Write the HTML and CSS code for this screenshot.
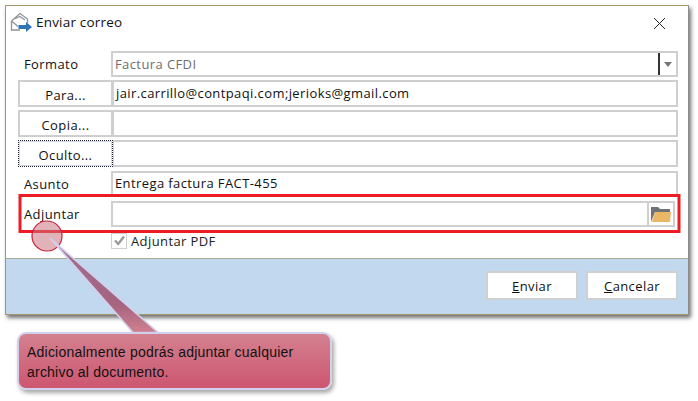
FILE: index.html
```html
<!DOCTYPE html>
<html lang="es">
<head>
<meta charset="utf-8">
<title>Enviar correo</title>
<link rel="stylesheet" href="styles.css">
</head>
<body>
<div class="window">
  <div class="titlebar">
    <svg class="app-icon" width="24" height="24" viewBox="0 0 24 24">
      <path d="M2.500 11 L11 3.500 L18.500 9 V13 M2.500 11 V20 H11 M2.500 11 L9 16.500 M5 9 L11 6.500 L16 10" fill="none" stroke="#8f9499" stroke-width="1.300"/>
      <path d="M9.500 15 H17 V12 L23 17 L17 22 V19 H9.500 Z" fill="#2f74b5"/>
    </svg>
    <span class="title">Enviar correo</span>
    <svg class="close" width="13" height="13" viewBox="0 0 13 13"><path d="M1 1 L12 12 M12 1 L1 12" stroke="#222" stroke-width="1" fill="none"/></svg>
  </div>
  <div class="form">
    <div class="row row-format">
      <span class="label">Formato</span>
      <div class="field select"><span class="muted">Factura CFDI</span><span class="caret-box"><i class="caret"></i></span></div>
    </div>
    <div class="row row-btn">
      <button class="pick">Para...</button>
      <div class="field joined">jair.carrillo@contpaqi.com;jerioks@gmail.com</div>
    </div>
    <div class="row row-btn">
      <button class="pick">Copia...</button>
      <div class="field joined"></div>
    </div>
    <div class="row row-btn">
      <button class="pick focus">Oculto...</button>
      <div class="field joined"></div>
    </div>
    <div class="row row-subject">
      <span class="label">Asunto</span>
      <div class="field">Entrega factura FACT-455</div>
    </div>
    <div class="row row-attach">
      <span class="label">Adjuntar</span>
      <div class="field attach">
        <span class="folder-box">
          <svg width="22" height="19" viewBox="0 0 22 19">
            <path d="M1 17 V2 H8 L10 4 H20 V7 H5 L1 17 Z" fill="#6f7276"/>
            <path d="M5 7 H21 L20 17 H2 Z" fill="#e9b766"/>
          </svg>
        </span>
      </div>
    </div>
    <div class="check-row">
      <span class="check"><svg width="13" height="13" viewBox="0 0 13 13"><path d="M2 6.500 L5.200 10 L11 2.500" fill="none" stroke="#9a9a9a" stroke-width="2.400"/></svg></span>
      <span class="muted-dark">Adjuntar PDF</span>
    </div>
  </div>
  <div class="footer">
    <button class="action"><u>E</u>nviar</button>
    <button class="action"><u>C</u>ancelar</button>
  </div>
</div>
<svg class="overlay" width="698" height="401" viewBox="0 0 698 401">
  <defs>
    <linearGradient id="tip" x1="0" y1="0" x2="0" y2="1">
      <stop offset="0" stop-color="#9a5f80" stop-opacity=".85"/>
      <stop offset=".7" stop-color="#a5647f"/>
      <stop offset="1" stop-color="#d0808f"/>
    </linearGradient>
  </defs>
  <rect x="20" y="195.500" width="659" height="36" fill="none" stroke="#ed1c24" stroke-width="3"/>
  <circle cx="47" cy="236" r="15" fill="#c9747f" fill-opacity=".55" stroke="#c8203f" stroke-width="1.200"/>
  <path d="M50 238 L133 332.500 H158 Z" fill="url(#tip)" stroke="#d3d0ee" stroke-width="1.600"/>
</svg>
<div class="note">Adicionalmente podrás adjuntar cualquier archivo al documento.</div>
</body>
</html>
```
FILE: styles.css
```css
* { box-sizing: border-box; }
html, body { margin: 0; padding: 0; }
body {
  width: 698px;
  height: 401px;
  background: #fff;
  position: relative;
  overflow: hidden;
  font-family: "Open Sans", "Noto Sans", sans-serif;
  font-size: 13px;
  letter-spacing: .4px;
  color: #111;
}
.window {
  margin: 5px 0 0 5px;
  width: 684px;
  height: 310px;
  background: #fff;
  border: 1px solid #a4976c;
  border-right-color: #8d8d8d;
  box-shadow: 2px 3px 4px rgba(0,0,0,.55);
  display: flex;
  flex-direction: column;
}
.titlebar {
  height: 34px;
  display: flex;
  align-items: center;
  padding: 0 22px 3px 3px;
}
.app-icon { margin-right: 3px; }
.title { font-size: 13.500px; letter-spacing: .2px; color: #111; flex: 1; }
.close { margin-top: 3px; }
.form { flex: 1; padding: 11px 10px 0 12px; display: flex; flex-direction: column; }
.row { display: flex; align-items: stretch; }
.row-format { height: 26px; margin-bottom: 3px; }
.row-btn { height: 27px; margin-bottom: 3px; }
.row-subject { height: 26px; margin-top: 1px; margin-bottom: 4px; }
.row-attach { height: 26px; padding-right: 3px; }
.label {
  width: 93px;
  padding-left: 6px;
  padding-top: 4px;
}
.field {
  flex: 1;
  border: 2px solid #cfcfcf;
  background: #fff;
  padding: 0 2px 2px;
  display: flex;
  align-items: center;
  white-space: nowrap;
}
.muted { color: #6d6d6d; flex: 1; }
.select { padding-right: 0; padding-bottom: 0; }
.caret-box {
  width: 18px;
  height: 100%;
  border-left: 2px solid #333;
  display: flex;
  align-items: center;
  justify-content: center;
}
.caret {
  width: 0;
  height: 0;
  border-left: 4px solid transparent;
  border-right: 4px solid transparent;
  border-top: 5px solid #777;
}
.joined { border-left-width: 1px; }
.pick {
  width: 95px;
  background: #fff;
  border: 2px solid #cfcfcf;
  font: inherit;
  letter-spacing: inherit;
  color: #111;
  padding: 2px 0 0;
}
.pick.focus { border: 1px dotted #223; outline: 1px solid #cfd6e4; outline-offset: -2px; }
.attach { padding: 0; justify-content: flex-end; }
.folder-box {
  width: 26px;
  height: 100%;
  border-left: 2px solid #cfcfcf;
  display: flex;
  align-items: center;
  justify-content: center;
}
.check-row {
  display: flex;
  align-items: center;
  gap: 4px;
  height: 17px;
  margin-top: 5px;
  padding-left: 93px;
}
.check {
  width: 16px;
  height: 16px;
  border: 1px solid #cfcfcf;
  display: flex;
  align-items: center;
  justify-content: center;
}
.muted-dark { color: #222; }
.footer {
  height: 56px;
  background: #c1d8ef;
  border-top: 1px solid #a7a893;
  display: flex;
  justify-content: flex-end;
  gap: 8px;
  padding: 12px 10px 0 0;
}
.action {
  width: 92px;
  height: 29px;
  background: #fff;
  border: 2px solid #d0d0d0;
  font: inherit;
  letter-spacing: inherit;
  color: #111;
  padding: 0;
}
.overlay { position: absolute; left: 0; top: 0; pointer-events: none; }
.note {
  position: absolute;
  left: 17px;
  top: 332px;
  width: 315px;
  height: 58px;
  padding: 8px 10px 0 8px;
  border: 2px solid #d3d0ee;
  border-radius: 9px;
  background: linear-gradient(#d3818f, #cd5670);
  box-shadow: 2px 3px 4px rgba(0,0,0,.35);
  font-family: "Liberation Sans", Arial, sans-serif;
  font-size: 14px;
  letter-spacing: .22px;
  line-height: 20px;
  color: #111;
}
```
